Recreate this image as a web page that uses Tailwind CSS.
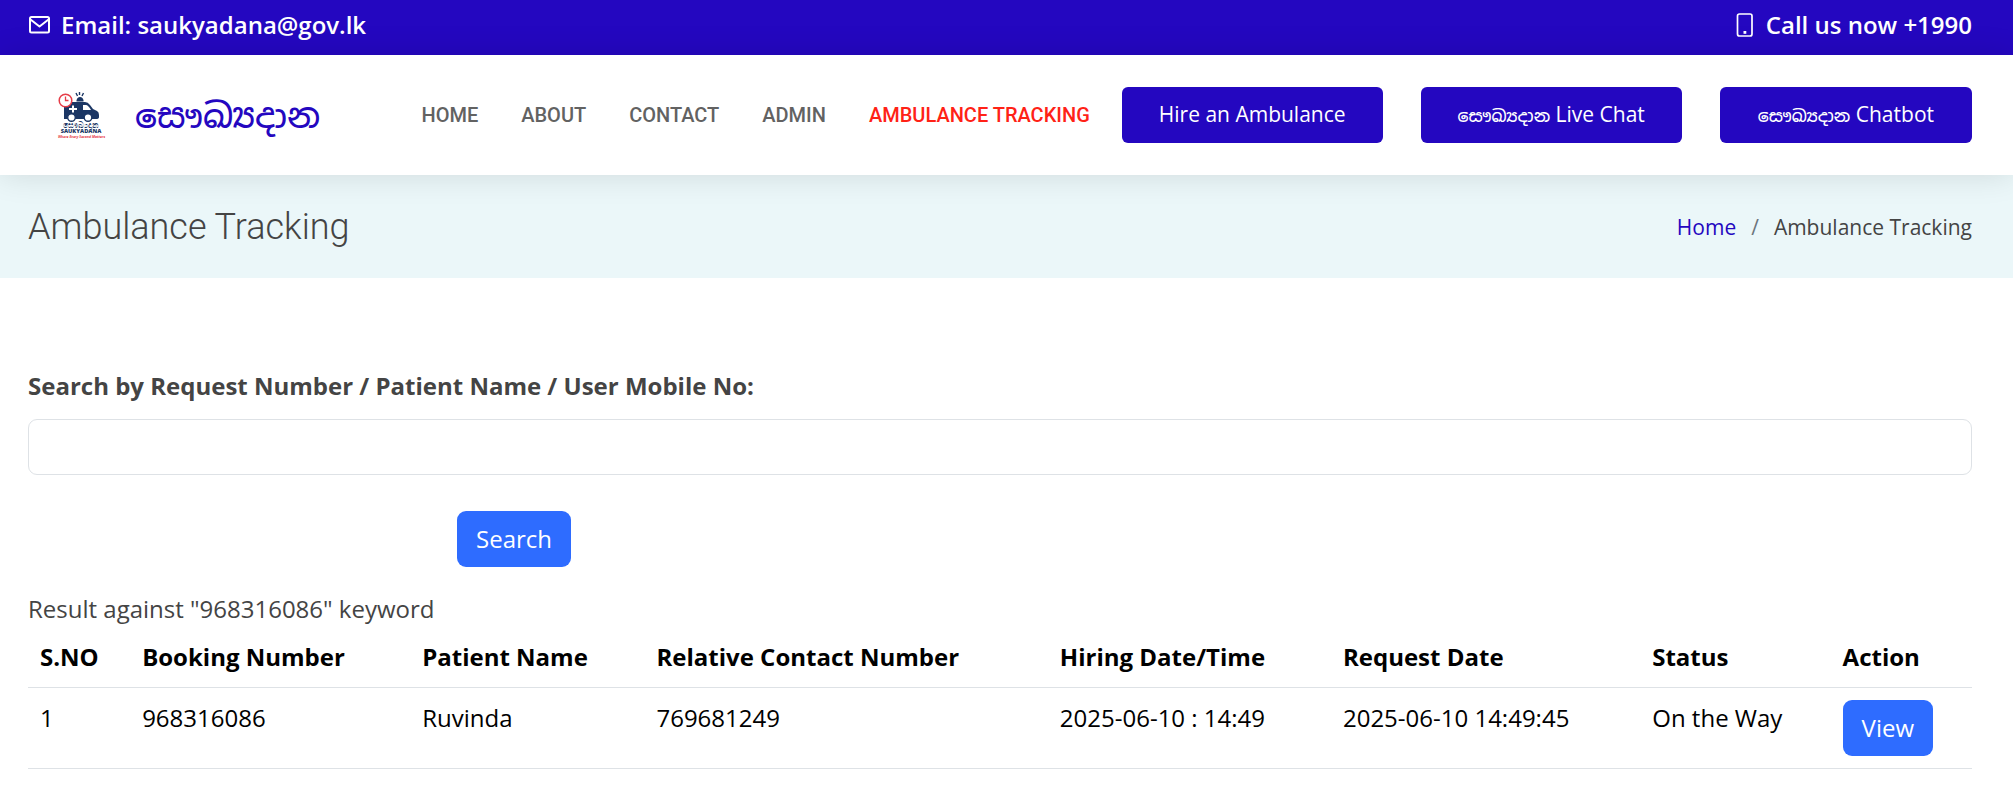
<!DOCTYPE html>
<html lang="en">
<head>
<meta charset="utf-8">
<title>Ambulance Tracking</title>
<script src="https://cdn.jsdelivr.net/npm/@tailwindcss/browser@4"></script>
</head>
<body class="bg-white font-['Open_Sans','Noto_Sans_Sinhala',sans-serif] text-2xl leading-9 text-[#444444]">

<div class="flex h-[55px] items-center justify-between bg-[#2407c0] pr-[41px] pl-7 font-semibold text-white">
  <a href="mailto:saukyadana@gov.lk" class="flex items-center gap-[11px] pb-[6px]">
    <svg class="h-5 w-[22px] shrink-0" viewBox="0 0 22 20" fill="none" stroke="currentColor" stroke-width="2" stroke-linejoin="round" aria-hidden="true"><rect x="2" y="2" width="19" height="15.500" rx="1.500"/><path d="M2.500 4.500 11.500 11.500 20.500 4.500"/></svg>
    Email: saukyadana@gov.lk
  </a>
  <a href="tel:+1990" class="flex items-center gap-3 pb-[6px]">
    <svg class="h-6 w-[18px] shrink-0" viewBox="0 0 18 24" aria-hidden="true"><rect x="1.500" y="1" width="14.500" height="22" rx="2" fill="none" stroke="currentColor" stroke-width="1.700"/><rect x="7.500" y="18" width="2.800" height="2.800" fill="currentColor"/></svg>
    Call us now +1990
  </a>
</div>

<header class="relative flex h-[120px] items-center bg-white pr-[41px] pl-[57px] shadow-[0_0_30px_rgba(0,0,0,0.12)]">
  <a href="#" class="flex items-center gap-[29px] text-[34px] font-medium whitespace-nowrap text-[#2407c0]">
    <svg class="h-[47px] w-[49px] shrink-0" viewBox="0 0 49 47" aria-hidden="true">
      <path d="M7 13 9 10H28Q31 10 33 13L36 17 40 19Q42 20 42 23V25Q42 27 39 27H7Z" fill="#1b3664"/>
      <path d="M26 13H29Q31 13 34 18H26Z" fill="#fff"/>
      <path d="M19.500 8.500Q20 5 23 5T26.500 8.500V9.500H19.500Z" fill="#1b3664"/>
      <path d="M22.500 0V3M19 1 20.500 4M26.500 1 25 4" stroke="#1b3664" stroke-width="1.400"/>
      <path d="M16 13.500V20.500M12 17H20" stroke="#fff" stroke-width="2"/>
      <circle cx="8.500" cy="8.500" r="6.300" fill="#fff" stroke="#e63d48" stroke-width="1.500"/>
      <path d="M8.500 4.500V8.500H11.500" fill="none" stroke="#e63d48" stroke-width="1.300"/>
      <g fill="#fff" stroke="#1b3664" stroke-width="1.400"><circle cx="14.500" cy="25.500" r="3.800"/><circle cx="31" cy="25.500" r="3.800"/></g>
      <g font-family="Open Sans, sans-serif" text-anchor="middle">
        <text x="24" y="35.500" font-size="7.500" font-weight="500" fill="#1b3664">සෞඛ්‍යදාන</text>
        <text x="24" y="41.300" font-size="5.700" font-weight="800" fill="#1b3664">SAUKYADANA</text>
        <text x="24.500" y="45.500" font-size="3.500" font-weight="700" font-style="italic" fill="#e63d48">Where Every Second Matters</text>
      </g>
    </svg>
    <span>සෞඛ්‍යදාන</span>
  </a>
  <nav class="ml-auto flex items-center gap-[43px] font-[Roboto] text-[20px] font-medium whitespace-nowrap text-[#626262]" aria-label="Main">
    <a href="#">HOME</a>
    <a href="#">ABOUT</a>
    <a href="#">CONTACT</a>
    <a href="#">ADMIN</a>
    <a href="#" class="text-[#ff2216]">AMBULANCE TRACKING</a>
  </nav>
  <div class="ml-8 flex gap-[38px] text-[21px] font-medium whitespace-nowrap text-white">
    <a href="#" class="h-14 rounded-md bg-[#2407c0] px-[37px] py-[9px]">Hire an Ambulance</a>
    <a href="#" class="h-14 rounded-md bg-[#2407c0] px-[37px] py-[9px]"><span class="text-[17px] leading-none">සෞඛ්‍යදාන</span> Live Chat</a>
    <a href="#" class="h-14 rounded-md bg-[#2407c0] px-[38px] py-[9px]"><span class="text-[17px] leading-none">සෞඛ්‍යදාන</span> Chatbot</a>
  </div>
</header>

<section class="flex h-[103px] items-center justify-between bg-[#ebf7f9] pr-[41px] pl-7">
  <h1 class="font-[Roboto] text-[36px] leading-10 font-light">Ambulance Tracking</h1>
  <ol class="flex gap-[15px] text-[21px]">
    <li><a href="#" class="text-[#2407c0]">Home</a></li>
    <li aria-hidden="true" class="text-[#6c757d]">/</li>
    <li>Ambulance Tracking</li>
  </ol>
</section>

<main class="pt-[90px] pr-[41px] pb-[17px] pl-7">
  <form>
    <label for="search" class="block font-bold">Search by Request Number / Patient Name / User Mobile No:</label>
    <input id="search" type="text" class="mt-[15px] block h-14 w-full rounded-[9px] border border-[#dee2e6] px-[18px]">
    <button type="button" class="mt-9 ml-[429px] block rounded-[9px] bg-[#2e6cff] px-[19px] py-[10px] text-white">Search</button>
  </form>
  <p class="mt-6">Result against "968316086" keyword</p>
  <table class="w-full text-left text-black">
    <thead>
      <tr class="border-b border-[#dee2e6]">
        <th class="p-3">S.NO</th><th class="p-3">Booking Number</th><th class="p-3">Patient Name</th><th class="p-3">Relative Contact Number</th><th class="p-3">Hiring Date/Time</th><th class="p-3">Request Date</th><th class="p-3">Status</th><th class="p-3">Action</th>
      </tr>
    </thead>
    <tbody>
      <tr class="border-b border-[#dee2e6] align-top">
        <td class="p-3">1</td><td class="p-3">968316086</td><td class="p-3">Ruvinda</td><td class="p-3">769681249</td><td class="p-3">2025-06-10 : 14:49</td><td class="p-3">2025-06-10 14:49:45</td><td class="p-3">On the Way</td>
        <td class="p-3"><a href="#" class="block w-fit rounded-[9px] bg-[#2e6cff] px-[19px] py-[10px] text-white">View</a></td>
      </tr>
    </tbody>
  </table>
</main>
</body>
</html>
